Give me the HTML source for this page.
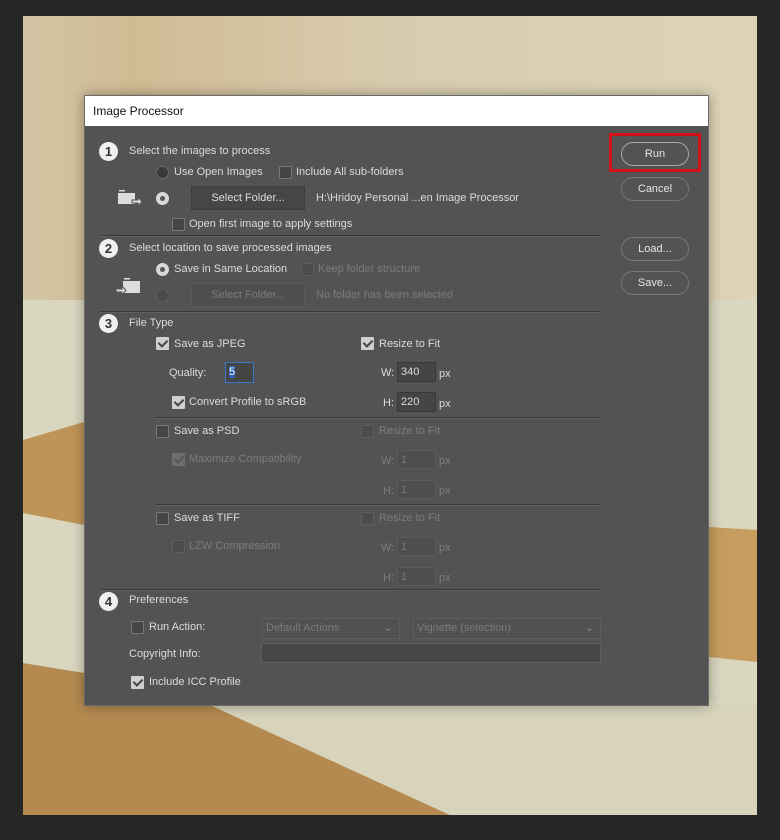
<!DOCTYPE html>
<html><head><meta charset="utf-8"><style>
*{margin:0;padding:0;box-sizing:border-box}
body{width:780px;height:840px;background:#262626;position:relative;overflow:hidden;font-family:"Liberation Sans",sans-serif;font-size:11px;color:#dcdcdc}
.a{position:absolute;white-space:nowrap}
.t{position:absolute;white-space:nowrap;line-height:12px}
.d{color:#7c7c7c}
.num{position:absolute;width:19px;height:19px;border-radius:50%;background:#f0f0f0;color:#333;font-weight:bold;font-size:13px;text-align:center;line-height:19px}
.rad{position:absolute;width:13px;height:13px;border-radius:50%;background:#3a3a3a;border:1px solid #6a6a6a}
.rad.on{background:#d8d8d8;border-color:#d8d8d8}
.rad.on::after{content:"";position:absolute;left:3px;top:3px;width:5px;height:5px;border-radius:50%;background:#555}
.rad.dis{background:#4a4a4a;border-color:#5e5e5e}
.cb{position:absolute;width:13px;height:13px;border:1px solid #777;background:#454545;border-radius:1px}
.cb.on{background:#cfcfcf;border-color:#cfcfcf}
.cb.on::after{content:"";position:absolute;left:3px;top:0px;width:4px;height:7px;border:solid #444;border-width:0 2px 2px 0;transform:rotate(45deg)}
.cb.dis{border-color:#5e5e5e;background:#4c4c4c}
.cb.dis.on{background:#6e6e6e;border-color:#6e6e6e}
.cb.dis.on::after{border-color:#555}
.btn{position:absolute;background:#464646;border:1px solid #3c3c3c;color:#dcdcdc;text-align:center;line-height:22px}
.btn.dis{background:#4e4e4e;border-color:#5a5a5a;color:#7c7c7c}
.inp{position:absolute;background:#454545;border:1px solid #383838;padding-left:3px;line-height:18px}
.inp.dis{background:#4e4e4e;border-color:#5b5b5b;color:#777}
.hr{position:absolute;height:1px;background:#393939;box-shadow:0 1px 0 #606060}
.pill{position:absolute;width:68px;height:24px;border:1px solid #a8a8a8;border-radius:12px;text-align:center;line-height:22px;color:#e6e6e6}
.sel{position:absolute;height:21px;border:1px solid #5e5e5e;background:#515151;color:#7a7a7a;padding-left:3px;line-height:19px}
.sel span{position:absolute;right:6px;top:0;color:#888}
</style></head><body>
<svg class="a" style="left:23px;top:16px" width="734" height="799" viewBox="23 16 734 799">
<defs><linearGradient id="g1" x1="0" y1="0" x2="1" y2="0"><stop offset="0" stop-color="#d2c5a4"/><stop offset="0.15" stop-color="#d0bb94"/><stop offset="0.5" stop-color="#d8ccae"/><stop offset="1" stop-color="#ddd3b6"/></linearGradient>
<linearGradient id="g2" x1="0" y1="0" x2="0" y2="1"><stop offset="0" stop-color="#d2c7a9"/><stop offset="1" stop-color="#dcd7bd"/></linearGradient></defs>
<rect x="23" y="16" width="734" height="799" fill="url(#g2)"/>
<rect x="23" y="16" width="734" height="400" fill="url(#g1)"/>
<rect x="23" y="300" width="734" height="515" fill="#dad7c0"/>
<polygon points="23,440 84,422 84,525 23,513" fill="#bf9458"/>
<polygon points="709,527 757,530 757,662 709,657" fill="#c79d5f"/>
<polygon points="23,663 84,673 84,705 210,705 450,815 23,815" fill="#b48a50"/>
<polygon points="210,705 450,815 757,815 757,705" fill="#d8d4bb"/>
</svg>
<div class="a" style="left:84px;top:95px;width:625px;height:611px;background:#535353;border:1px solid #6a6a6a;box-shadow:0 0 12px rgba(0,0,0,.35)"></div>
<div class="a" style="left:85px;top:96px;width:623px;height:30px;background:#fff;color:#111;font-size:12px;line-height:30px;padding-left:8px">Image Processor</div>

<div class="num" style="left:99px;top:142px">1</div>
<div class="t" style="left:129px;top:145px">Select the images to process</div>
<div class="rad" style="left:156px;top:166px"></div>
<div class="t" style="left:174px;top:166px">Use Open Images</div>
<div class="cb" style="left:279px;top:166px"></div>
<div class="t" style="left:296px;top:166px">Include All sub-folders</div>
<svg class="a" style="left:116px;top:188px" width="28" height="20"><rect x="3" y="2" width="6" height="1.5" fill="#ddd"/><rect x="2" y="5" width="17" height="11" fill="#ddd"/><path d="M16 12h6v-3l4 4.5-4 4.5v-3h-6z" fill="#ddd" stroke="#535353" stroke-width="1"/></svg>
<div class="rad on" style="left:156px;top:192px"></div>
<div class="btn" style="left:191px;top:186px;width:114px;height:24px">Select Folder...</div>
<div class="t" style="left:316px;top:192px">H:\Hridoy Personal ...en Image Processor</div>
<div class="cb" style="left:172px;top:218px"></div>
<div class="t" style="left:189px;top:218px">Open first image to apply settings</div>
<div class="hr" style="left:100px;top:235px;width:500px"></div>

<div class="num" style="left:99px;top:239px">2</div>
<div class="t" style="left:129px;top:242px">Select location to save processed images</div>
<div class="rad on" style="left:156px;top:263px"></div>
<div class="t" style="left:174px;top:263px">Save in Same Location</div>
<div class="cb dis" style="left:301px;top:263px"></div>
<div class="t d" style="left:318px;top:263px">Keep folder structure</div>
<svg class="a" style="left:114px;top:276px" width="28" height="20"><rect x="10" y="2" width="6" height="1.5" fill="#ddd"/><rect x="9" y="5" width="17" height="12" fill="#ddd"/><path d="M2 13h6v-3l4 4.5-4 4.5v-3h-6z" fill="#ddd" stroke="#535353" stroke-width="1"/></svg>
<div class="rad dis" style="left:156px;top:289px"></div>
<div class="btn dis" style="left:191px;top:283px;width:114px;height:24px">Select Folder...</div>
<div class="t d" style="left:316px;top:289px">No folder has been selected</div>
<div class="hr" style="left:100px;top:311px;width:500px"></div>

<div class="num" style="left:99px;top:314px">3</div>
<div class="t" style="left:129px;top:317px">File Type</div>
<div class="cb on" style="left:156px;top:337px"></div>
<div class="t" style="left:174px;top:338px">Save as JPEG</div>
<div class="cb on" style="left:361px;top:337px"></div>
<div class="t" style="left:379px;top:338px">Resize to Fit</div>
<div class="t" style="left:169px;top:367px">Quality:</div>
<div class="inp" style="left:225px;top:362px;width:29px;height:21px;border:1px solid #3a78c8"><span style="background:#2a62b0;color:#fff">5</span></div>
<div class="t" style="left:381px;top:367px">W:</div>
<div class="inp" style="left:397px;top:362px;width:39px;height:20px">340</div>
<div class="t" style="left:439px;top:368px">px</div>
<div class="cb on" style="left:172px;top:396px"></div>
<div class="t" style="left:189px;top:396px">Convert Profile to sRGB</div>
<div class="t" style="left:383px;top:397px">H:</div>
<div class="inp" style="left:397px;top:392px;width:39px;height:20px">220</div>
<div class="t" style="left:439px;top:398px">px</div>
<div class="hr" style="left:155px;top:417px;width:445px"></div>

<div class="cb" style="left:156px;top:425px"></div>
<div class="t" style="left:174px;top:425px">Save as PSD</div>
<div class="cb dis" style="left:361px;top:425px"></div>
<div class="t d" style="left:379px;top:425px">Resize to Fit</div>
<div class="cb dis on" style="left:172px;top:453px"></div>
<div class="t d" style="left:189px;top:453px">Maximize Compatibility</div>
<div class="t d" style="left:381px;top:455px">W:</div>
<div class="inp dis" style="left:397px;top:450px;width:39px;height:19px">1</div>
<div class="t d" style="left:439px;top:455px">px</div>
<div class="t d" style="left:383px;top:485px">H:</div>
<div class="inp dis" style="left:397px;top:480px;width:39px;height:19px">1</div>
<div class="t d" style="left:439px;top:485px">px</div>
<div class="hr" style="left:155px;top:504px;width:445px"></div>

<div class="cb" style="left:156px;top:512px"></div>
<div class="t" style="left:174px;top:512px">Save as TIFF</div>
<div class="cb dis" style="left:361px;top:512px"></div>
<div class="t d" style="left:379px;top:512px">Resize to Fit</div>
<div class="cb dis" style="left:172px;top:540px"></div>
<div class="t d" style="left:189px;top:540px">LZW Compression</div>
<div class="t d" style="left:381px;top:542px">W:</div>
<div class="inp dis" style="left:397px;top:537px;width:39px;height:19px">1</div>
<div class="t d" style="left:439px;top:542px">px</div>
<div class="t d" style="left:383px;top:572px">H:</div>
<div class="inp dis" style="left:397px;top:567px;width:39px;height:19px">1</div>
<div class="t d" style="left:439px;top:572px">px</div>
<div class="hr" style="left:100px;top:589px;width:500px"></div>

<div class="num" style="left:99px;top:592px">4</div>
<div class="t" style="left:129px;top:594px">Preferences</div>
<div class="cb" style="left:131px;top:621px"></div>
<div class="t" style="left:149px;top:621px">Run Action:</div>
<div class="sel" style="left:262px;top:618px;width:138px">Default Actions<span>&#8964;</span></div>
<div class="sel" style="left:413px;top:618px;width:188px">Vignette (selection)<span>&#8964;</span></div>
<div class="t" style="left:129px;top:648px">Copyright Info:</div>
<div class="a" style="left:261px;top:643px;width:340px;height:20px;background:#474747;border:1px solid #5f5f5f"></div>
<div class="cb on" style="left:131px;top:676px"></div>
<div class="t" style="left:149px;top:676px">Include ICC Profile</div>

<div class="a" style="left:609px;top:133px;width:92px;height:39px;border:3px solid #d2121a"></div>
<div class="pill" style="left:621px;top:142px">Run</div>
<div class="pill" style="left:621px;top:177px;border-color:#777">Cancel</div>
<div class="pill" style="left:621px;top:237px;border-color:#777">Load...</div>
<div class="pill" style="left:621px;top:271px;border-color:#777">Save...</div>
</body></html>
